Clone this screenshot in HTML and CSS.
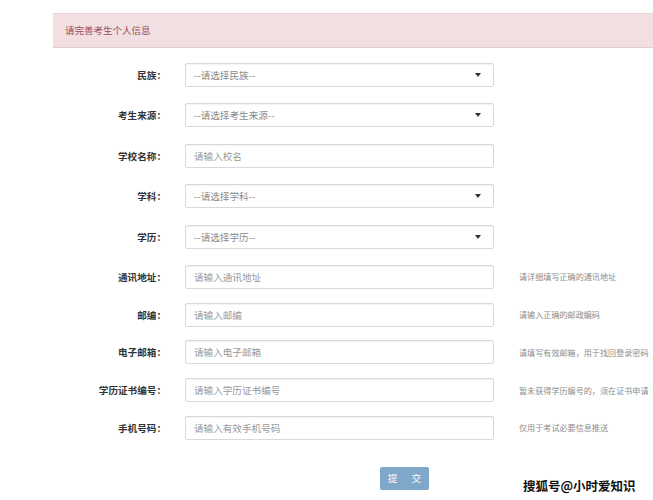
FILE: index.html
```html
<!DOCTYPE html>
<html lang="zh-CN">
<head>
<meta charset="utf-8">
<title>考生信息</title>
<link rel="stylesheet" href="styles.css">
</head>
<body>
<div class="page">
  <div class="alert">请完善考生个人信息</div>
  <form class="form">
    <div class="group group-select">
      <div class="row">
        <label class="label">民族：</label>
        <div class="control select"><span class="ph">--请选择民族--</span><span class="caret"></span></div>
      </div>
      <div class="row">
        <label class="label">考生来源：</label>
        <div class="control select"><span class="ph">--请选择考生来源--</span><span class="caret"></span></div>
      </div>
      <div class="row">
        <label class="label">学校名称：</label>
        <div class="control"><span class="ph">请输入校名</span></div>
      </div>
      <div class="row">
        <label class="label">学科：</label>
        <div class="control select"><span class="ph">--请选择学科--</span><span class="caret"></span></div>
      </div>
      <div class="row">
        <label class="label">学历：</label>
        <div class="control select"><span class="ph">--请选择学历--</span><span class="caret"></span></div>
      </div>
    </div>
    <div class="group group-input">
      <div class="row">
        <label class="label">通讯地址：</label>
        <div class="control"><span class="ph">请输入通讯地址</span></div>
        <span class="help">请详细填写正确的通讯地址</span>
      </div>
      <div class="row">
        <label class="label">邮编：</label>
        <div class="control"><span class="ph">请输入邮编</span></div>
        <span class="help">请输入正确的邮政编码</span>
      </div>
      <div class="row">
        <label class="label">电子邮箱：</label>
        <div class="control"><span class="ph">请输入电子邮箱</span></div>
        <span class="help">请填写有效邮箱，用于找回登录密码</span>
      </div>
      <div class="row">
        <label class="label">学历证书编号：</label>
        <div class="control"><span class="ph">请输入学历证书编号</span></div>
        <span class="help">暂未获得学历编号的，须在证书申请</span>
      </div>
      <div class="row">
        <label class="label">手机号码：</label>
        <div class="control"><span class="ph">请输入有效手机号码</span></div>
        <span class="help">仅用于考试必要信息推送</span>
      </div>
    </div>
    <div class="actions">
      <button type="button" class="btn">提 交</button>
    </div>
  </form>
</div>
<div class="watermark">搜狐号@小时爱知识</div>
</body>
</html>
```

FILE: styles.css
```css
html, body {
  margin: 0;
  padding: 0;
  background: #ffffff;
  overflow: hidden;
  width: 653px;
  height: 500px;
}
body {
  font-family: "Noto Sans CJK SC", "Noto Sans", sans-serif;
  color: #333;
  position: relative;
}
.page {
  padding: 13px 0 0 53px;
  width: 600px;
}
.alert {
  height: 35px;
  box-sizing: border-box;
  background: #f1dfe1;
  border-top: 1px solid #e7d2d6;
  border-bottom: 1px solid #e4cdd2;
  color: #9c4d5d;
  font-size: 9.5px;
  line-height: 33px;
  padding-left: 12px;
}
.form {
  margin: 0;
  padding-top: 15px;
}
.group {
  display: flex;
  flex-direction: column;
}
.group-select {
  gap: 16.4px;
}
.group-input {
  gap: 13.75px;
  margin-top: 16.4px;
}
.row {
  display: flex;
  align-items: center;
  height: 24px;
}
.label {
  width: 113px;
  flex: none;
  text-align: right;
  font-size: 9.6px;
  font-weight: bold;
  color: #333;
  margin-right: 19px;
  white-space: nowrap;
}
.control {
  width: 309px;
  height: 24px;
  box-sizing: border-box;
  flex: none;
  border: 1px solid #d9d9d9;
  border-radius: 2px;
  box-shadow: inset 0 1px 1px rgba(0,0,0,0.05);
  display: flex;
  align-items: center;
  padding-left: 8px;
  position: relative;
}
.ph {
  font-size: 9.6px;
  color: #999;
  white-space: nowrap;
}
.select .ph {
  color: #8a8a8a;
}
.caret {
  position: absolute;
  right: 12px;
  top: 50%;
  margin-top: -2px;
  width: 0;
  height: 0;
  border-left: 3.5px solid transparent;
  border-right: 3.5px solid transparent;
  border-top: 4px solid #333;
}
.help {
  margin-left: 25px;
  font-size: 8.1px;
  color: #8c8c8c;
  white-space: nowrap;
}
.actions {
  display: flex;
  padding-left: 327px;
  margin-top: 27px;
}
.btn {
  width: 49px;
  height: 23px;
  border: none;
  border-radius: 2px;
  background: #7fa7c9;
  color: #ffffff;
  font-family: "Noto Sans CJK SC", sans-serif;
  font-size: 9.6px;
  letter-spacing: 6px;
  padding: 0 0 0 6px;
  cursor: pointer;
}
.watermark {
  position: absolute;
  left: 523px;
  top: 476px;
  font-size: 12.5px;
  font-weight: bold;
  color: #111;
  white-space: nowrap;
  text-shadow: 1px 0 0 #fff, -1px 0 0 #fff, 0 1px 0 #fff, 0 -1px 0 #fff;
}
```
